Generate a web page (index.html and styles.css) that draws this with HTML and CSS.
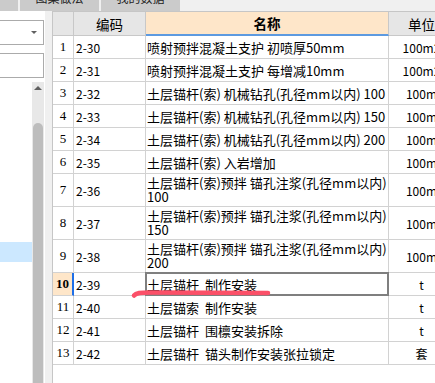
FILE: index.html
```html
<!DOCTYPE html>
<html lang="zh-CN">
<head>
<meta charset="utf-8">
<title>定额库</title>
<link rel="stylesheet" href="styles.css">
</head>
<body>
<div class="app">
  <div class="tabbar">
    <div class="tab-lead"></div>
    <div class="tab"><span>图集做法</span></div>
    <div class="tab"><span>我的数据</span></div>
  </div>
  <div class="main">
    <aside class="side">
      <div class="combo"><span class="caret"></span></div>
      <div class="search"></div>
      <div class="tree">
        <div class="tree-list"><div class="tree-sel"></div></div>
        <div class="vscroll"><span class="up"></span><div class="thumb"></div></div>
      </div>
    </aside>
    <div class="gutter"></div>
    <section class="grid-wrap">
      <div class="grid">
        <div class="c hd"></div><div class="c hd center">编码</div><div class="c hd center hd-sel">名称</div><div class="c hd center">单位</div>

        <div class="c no">1</div><div class="c code">2-30</div><div class="c name">喷射预拌混凝土支护 初喷厚50mm</div><div class="c unit">100m2</div>
        <div class="c no">2</div><div class="c code">2-31</div><div class="c name">喷射预拌混凝土支护 每增减10mm</div><div class="c unit">100m2</div>
        <div class="c no">3</div><div class="c code">2-32</div><div class="c name">土层锚杆(索) 机械钻孔(孔径mm以内) 100</div><div class="c unit">100m</div>
        <div class="c no">4</div><div class="c code">2-33</div><div class="c name">土层锚杆(索) 机械钻孔(孔径mm以内) 150</div><div class="c unit">100m</div>
        <div class="c no">5</div><div class="c code">2-34</div><div class="c name">土层锚杆(索) 机械钻孔(孔径mm以内) 200</div><div class="c unit">100m</div>
        <div class="c no">6</div><div class="c code">2-35</div><div class="c name">土层锚杆(索) 入岩增加</div><div class="c unit">100m</div>
        <div class="c no">7</div><div class="c code">2-36</div><div class="c name two">土层锚杆(索)预拌 锚孔注浆(孔径mm以内)<br>100</div><div class="c unit">100m</div>
        <div class="c no">8</div><div class="c code">2-37</div><div class="c name two">土层锚杆(索)预拌 锚孔注浆(孔径mm以内)<br>150</div><div class="c unit">100m</div>
        <div class="c no">9</div><div class="c code">2-38</div><div class="c name two">土层锚杆(索)预拌 锚孔注浆(孔径mm以内)<br>200</div><div class="c unit">100m</div>
        <div class="c no no-sel">10</div><div class="c code">2-39</div><div class="c name spaced cell-sel">土层锚杆 制作安装</div><div class="c unit">t</div>
        <div class="c no">11</div><div class="c code">2-40</div><div class="c name spaced">土层锚索 制作安装</div><div class="c unit">t</div>
        <div class="c no">12</div><div class="c code">2-41</div><div class="c name spaced">土层锚杆 围檩安装拆除</div><div class="c unit">t</div>
        <div class="c no">13</div><div class="c code">2-42</div><div class="c name spaced">土层锚杆 锚头制作安装张拉锁定</div><div class="c unit">套</div>
      </div>
    </section>
  </div>
  <svg class="mark" width="435" height="383" viewBox="0 0 435 383" aria-hidden="true">
    <path d="M134 295.5 C136 293 140 292.5 150 292.5 L268 293" fill="none" stroke="#fb5068" stroke-width="4.5" stroke-linecap="round"/>
  </svg>
</div>
</body>
</html>
```
FILE: styles.css
```css
html, body {
  margin: 0;
  padding: 0;
  background: #ffffff;
  overflow: hidden;
}
.app {
  position: relative;
  width: 435px;
  height: 383px;
  overflow: hidden;
  font-family: "Noto Sans CJK SC", "Liberation Sans", sans-serif;
  font-size: 12px;
  color: #000;
}
.tabbar {
  display: flex;
  height: 11px;
  background: #f0f0f0;
  gap: 2px;
  overflow: hidden;
}
.tab-lead {
  width: 18px;
  background: #cbcbcb;
}
.tab {
  width: 79px;
  background: #cbcbcb;
  display: flex;
  justify-content: center;
  overflow: hidden;
  color: #222;
  font-size: 12px;
}
.tab span {
  line-height: 12px;
  margin-top: -8px;
}
.main {
  display: flex;
  height: 372px;
}
.side {
  width: 45px;
  background: #fff;
  display: flex;
  flex-direction: column;
}
.combo, .search {
  box-sizing: border-box;
  height: 25px;
  width: 45px;
  margin-left: -1px;
  border: 1px solid #ababab;
  background: #fff;
}
.combo {
  margin-top: 9px;
  position: relative;
  display: flex;
  align-items: center;
  justify-content: flex-end;
  padding-right: 6px;
}
.caret {
  width: 0;
  height: 0;
  border-left: 3px solid transparent;
  border-right: 3px solid transparent;
  border-top: 3px solid #606060;
}
.search {
  margin-top: 8px;
}
.tree {
  margin-top: 4px;
  flex: 1;
  display: flex;
}
.tree-list {
  width: 32px;
  padding-top: 160px;
}
.tree-sel {
  height: 20px;
  background: #cce8ff;
}
.vscroll {
  width: 12px;
  background: #e8e8e8;
  display: flex;
  flex-direction: column;
  align-items: center;
}
.up {
  margin-top: 4px;
  width: 0;
  height: 0;
  border-left: 4px solid transparent;
  border-right: 4px solid transparent;
  border-bottom: 4px solid #606060;
}
.thumb {
  margin-top: 33px;
  width: 10px;
  flex: 1;
  background: #bdbdbd;
  border-radius: 5px 5px 0 0;
}
.gutter {
  width: 7px;
  background: #f0f0f0;
}
.grid-wrap {
  flex: 1;
  overflow: hidden;
  background: #fff;
  border-left: 1px solid #c6c6c6;
}
.grid {
  display: grid;
  width: max-content;
  grid-template-columns: 21px 72px 243px 66px;
  grid-template-rows: 24px repeat(6, 23px) repeat(3, 33px) repeat(4, 23px);
  border-top: 1px solid #c6c6c6;
}
.c {
  box-sizing: border-box;
  border-right: 1px solid #d2d2d2;
  border-bottom: 1px solid #d2d2d2;
  display: flex;
  align-items: center;
  white-space: nowrap;
  overflow: visible;
}
.hd {
  background: #e6e6e6;
  font-size: 13.5px;
  border-color: #c8c8c8;
}
.center {
  justify-content: center;
}
.hd-sel {
  background: #fee6c9;
  font-weight: bold;
  border-bottom: 2px solid #5d9ae0;
}
.no {
  justify-content: center;
  font-family: "Liberation Serif", "Noto Sans CJK SC", serif;
  font-size: 13px;
}
.no-sel {
  background: #fee6c9;
  font-weight: bold;
  border-right: 2px solid #1e6fe8;
}
.code {
  padding-left: 2px;
}
.name {
  padding-left: 1px;
  font-size: 13px;
}
.name.spaced {
  word-spacing: 3px;
}
.name.two {
  line-height: 14px;
}
.unit {
  justify-content: center;
}
.cell-sel {
  position: relative;
}
.cell-sel::after {
  content: "";
  position: absolute;
  top: -1px;
  left: -1px;
  right: -1px;
  bottom: -1px;
  border: 2px solid #7f7f7f;
}
.mark {
  position: absolute;
  left: 0;
  top: 0;
  pointer-events: none;
}
```
